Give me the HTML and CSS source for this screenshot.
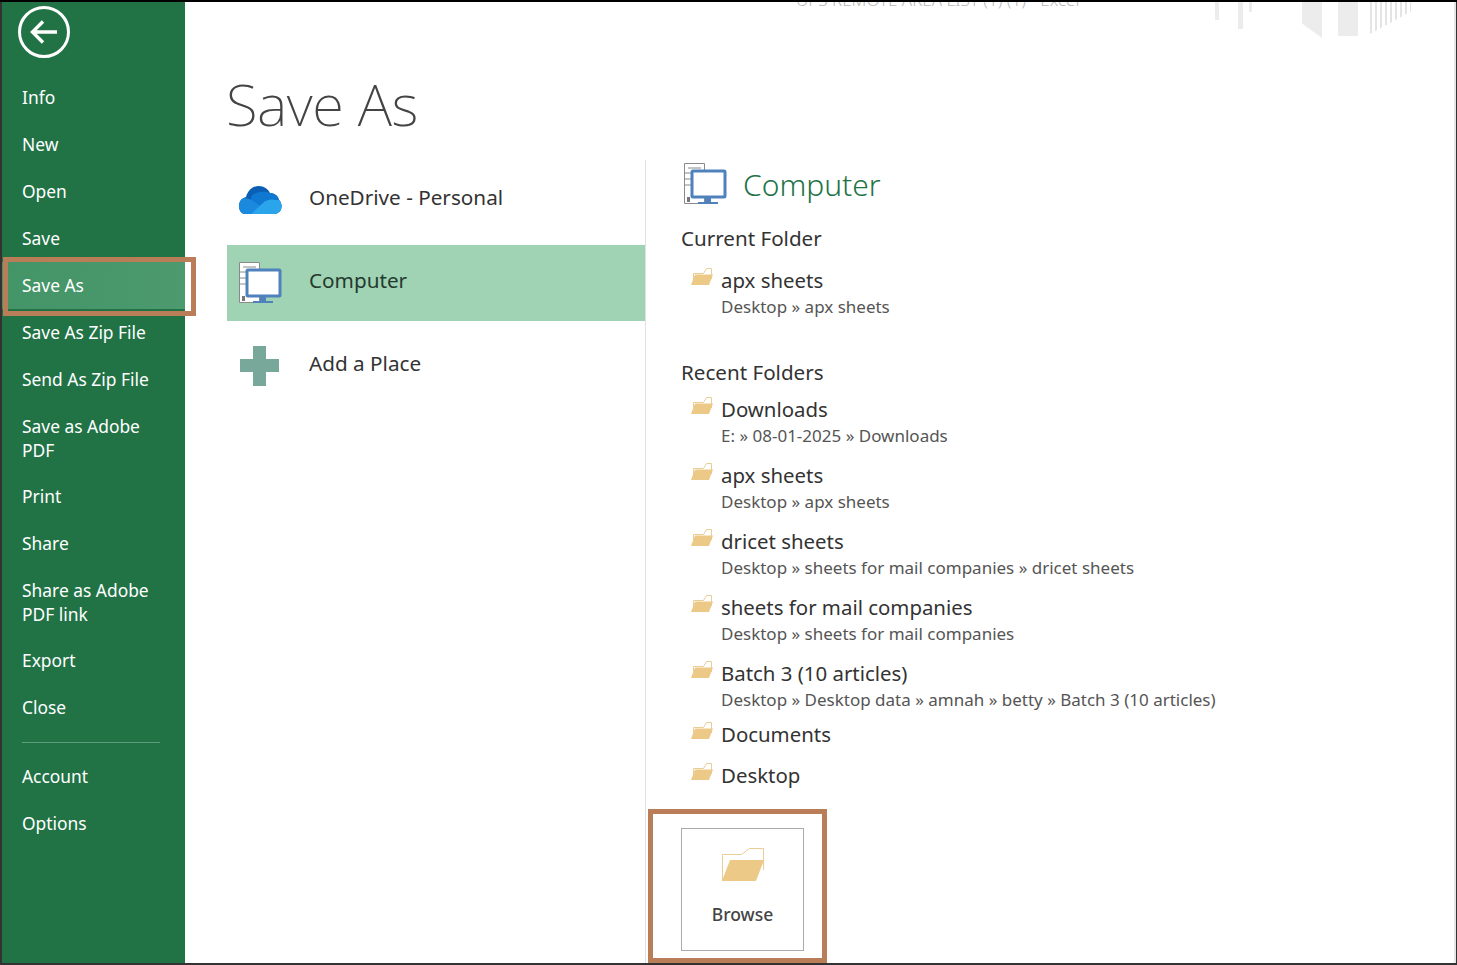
FILE: index.html
```html
<!DOCTYPE html>
<html lang="en">
<head>
<meta charset="utf-8">
<title>Save As</title>
<link rel="stylesheet" href="styles.css">
</head>
<body>
<div class="app">
  <aside class="sidebar">
    <div class="back">
      <svg width="54" height="54" viewBox="0 0 54 54" fill="none" stroke="#fff">
        <circle cx="27" cy="27" r="24.5" stroke-width="3"/>
        <path d="M40 27H16M26 16.5 15.5 27 26 37.5" stroke-width="3.4"/>
      </svg>
    </div>
    <nav class="nav">
      <a class="nav-item">Info</a>
      <a class="nav-item">New</a>
      <a class="nav-item">Open</a>
      <a class="nav-item">Save</a>
      <a class="nav-item nav-item-active">Save As</a>
      <a class="nav-item">Save As Zip File</a>
      <a class="nav-item">Send As Zip File</a>
      <a class="nav-item nav-item-wrap">Save as Adobe PDF</a>
      <a class="nav-item">Print</a>
      <a class="nav-item">Share</a>
      <a class="nav-item nav-item-wrap">Share as Adobe PDF link</a>
      <a class="nav-item">Export</a>
      <a class="nav-item">Close</a>
      <div class="nav-sep"></div>
      <a class="nav-item">Account</a>
      <a class="nav-item">Options</a>
    </nav>
  </aside>

  <main class="main">
    <div class="window-title">UPS REMOTE AREA LIST (1) (1) - Excel</div>
    <div class="deco">
      <span class="deco-bar deco-a"></span><span class="deco-bar deco-b"></span><span class="deco-bar deco-c"></span><span class="deco-bar deco-d"></span>
      <span class="deco-bar deco-e"></span><span class="deco-bar deco-f"></span>
    </div>
    <h1 class="title">Save As</h1>
    <div class="content">
      <section class="places">
        <div class="place">
          <svg class="place-icon" width="44" height="30" viewBox="0 0 44 30">
            <clipPath id="cloud-shape">
              <path d="M7 29C3 29 1 25 1 21 1 16 4 13 8 12 10 5 15 1 21 1 26 1 30 4 32 8 37 8 40 11 41 15 43 17 43.500 19 43.500 22 43.500 26 40 29 36 29Z"/>
            </clipPath>
            <g clip-path="url(#cloud-shape)">
              <path fill="#0a5fb4" d="M0 0h44v30H0z"/>
              <path fill="#0f78d0" d="M14 10c6-4 13-4 18-2 4 0 9 3 12 8v6L26 26 12 16z"/>
              <path fill="#1b8ade" d="M0 14c5-2 11-1 15 2l12 8-6 6H0z"/>
              <path fill="#2aa5ec" d="M12 30 26 17c3-2 7-3 10-2 3 0 6 0 8 1v14z"/>
            </g>
          </svg>
          <span class="place-label">OneDrive - Personal</span>
        </div>
        <div class="place place-active">
          <svg class="place-icon" width="44" height="44" viewBox="0 0 44 44">
            <use href="#computer-icon"/>
          </svg>
          <span class="place-label">Computer</span>
        </div>
        <div class="place">
          <svg class="place-icon" width="44" height="40" viewBox="0 0 44 40">
            <path fill="#78a89a" d="M15 0h13v13h13v13H28v14H15V26H2V13h13z"/>
          </svg>
          <span class="place-label">Add a Place</span>
        </div>
      </section>

      <section class="details">
        <header class="details-head">
          <svg width="44" height="44" viewBox="0 0 44 44">
            <symbol id="computer-icon" viewBox="0 0 44 44">
              <path fill="#fff" stroke="#8a8a8a" d="M1.500 1.500h20v40h-20z"/>
              <path stroke="#8a8a8a" fill="none" d="M5 6h13M2 11h8M2 17h8M2 23h8"/>
              <path fill="#777" d="M4 35h3v5H4z"/>
              <rect x="9" y="9" width="33" height="26" fill="#fff" stroke="#4f81bd" stroke-width="3" rx="1"/>
              <path fill="#4f81bd" d="M22 35h6v5h7v2H15v-2h7z"/>
            </symbol>
            <use href="#computer-icon"/>
          </svg>
          <h2 class="details-title">Computer</h2>
        </header>

        <h3 class="group-title">Current Folder</h3>
        <div class="folder folder-current">
          <svg class="folder-icon" viewBox="0 0 22 19"><use href="#small-folder"/></svg>
          <div><div class="folder-name">apx sheets</div><div class="folder-path">Desktop » apx sheets</div></div>
        </div>

        <h3 class="group-title group-recent">Recent Folders</h3>
        <div class="folder">
          <svg class="folder-icon" viewBox="0 0 22 19">
            <symbol id="small-folder" viewBox="0 0 22 19">
              <path fill="#fff" stroke="#e8cd97" d="M2.500 17V6.500h10l3-5h5V12"/>
              <path fill="#edc987" d="M0 18 4 7.500h18L18 18z"/>
            </symbol>
            <use href="#small-folder"/>
          </svg>
          <div><div class="folder-name">Downloads</div><div class="folder-path">E: » 08-01-2025 » Downloads</div></div>
        </div>
        <div class="folder">
          <svg class="folder-icon" viewBox="0 0 22 19"><use href="#small-folder"/></svg>
          <div><div class="folder-name">apx sheets</div><div class="folder-path">Desktop » apx sheets</div></div>
        </div>
        <div class="folder">
          <svg class="folder-icon" viewBox="0 0 22 19"><use href="#small-folder"/></svg>
          <div><div class="folder-name">dricet sheets</div><div class="folder-path">Desktop » sheets for mail companies » dricet sheets</div></div>
        </div>
        <div class="folder">
          <svg class="folder-icon" viewBox="0 0 22 19"><use href="#small-folder"/></svg>
          <div><div class="folder-name">sheets for mail companies</div><div class="folder-path">Desktop » sheets for mail companies</div></div>
        </div>
        <div class="folder folder-tight">
          <svg class="folder-icon" viewBox="0 0 22 19"><use href="#small-folder"/></svg>
          <div><div class="folder-name">Batch 3 (10 articles)</div><div class="folder-path">Desktop » Desktop data » amnah » betty » Batch 3 (10 articles)</div></div>
        </div>
        <div class="folder folder-single">
          <svg class="folder-icon" viewBox="0 0 22 19"><use href="#small-folder"/></svg>
          <div class="folder-name">Documents</div>
        </div>
        <div class="folder folder-single">
          <svg class="folder-icon" viewBox="0 0 22 19"><use href="#small-folder"/></svg>
          <div class="folder-name">Desktop</div>
        </div>

        <button class="browse">
          <svg width="44" height="34" viewBox="0 0 44 34">
            <path fill="#fff" stroke="#e8cd97" d="M1.500 33V6.500h19l8-6h14V22"/>
            <path fill="#edc987" d="M1 33 9 12h34l-8 21z"/>
          </svg>
          <span>Browse</span>
        </button>
      </section>
    </div>
  </main>

  <div class="callout callout-saveas"></div>
  <div class="callout callout-browse"></div>
</div>
</body>
</html>
```

FILE: styles.css
```css
* { box-sizing: border-box; }
html, body { margin: 0; height: 100%; }
body {
  background: #333;
  padding: 2px 1px 2px 2px;
  font-family: "Noto Sans", "Open Sans", sans-serif;
  overflow: hidden;
}
.app {
  position: relative;
  display: flex;
  height: 961px;
  background: #fff;
  border-right: 2px solid #e6e6e6;
  overflow: hidden;
}
body::before {
  content: "";
  position: fixed;
  inset: 0 0 auto 0;
  height: 2px;
  background: #000;
}

/* Sidebar */
.sidebar {
  width: 183px;
  flex: none;
  background: #217346;
  color: #fff;
}
.back {
  height: 72px;
  padding: 3px 0 0 15px;
}
.back svg { display: block; }
.nav-item {
  display: block;
  padding: 12px 20px 11.500px;
  font-size: 17.400px;
  line-height: 23.500px;
  color: #fff;
}
.nav-item-wrap { padding-bottom: 11px; }
.nav-item-active {
  background: linear-gradient(100deg, #439467, #4c9a6e);
}
.nav-sep {
  height: 1px;
  margin: 11px 25px 10px 20px;
  background: #5d9d7c;
}

/* Main */
.main {
  position: relative;
  flex: 1;
  min-width: 0;
}
.window-title {
  position: absolute;
  top: -11px;
  left: 611px;
  font-size: 17px;
  line-height: 18px;
  font-weight: 300;
  color: #b8b8b8;
  white-space: nowrap;
}
.deco-bar {
  position: absolute;
  top: 0;
  background: #ececec;
}
.deco-a { left: 1030px; width: 4px; height: 18px; }
.deco-b { left: 1053px; width: 5px; height: 27px; }
.deco-c { left: 1064px; width: 3px; height: 10px; }
.deco-d { left: 1117px; width: 20px; height: 36px; clip-path: polygon(0 0, 100% 0, 100% 100%, 0 60%); }
.deco-e { left: 1153px; width: 20px; height: 34px; }
.deco-f {
  left: 1185px;
  width: 41px;
  height: 32px;
  background: repeating-linear-gradient(90deg, #e4e4e4 0 2px, #fff 2px 5px);
  clip-path: polygon(0 0, 100% 0, 100% 30%, 0 100%);
}
.title {
  height: 158px;
  margin: 0;
  padding: 63px 0 0 41px;
  font-size: 58px;
  font-weight: 200;
  letter-spacing: -0.500px;
  line-height: 78px;
  color: #444;
}
.content {
  display: flex;
  height: 803px;
}

/* Places */
.places {
  width: 461px;
  flex: none;
  padding: 2px 0 0 42px;
  border-right: 1px solid #e1e1e1;
  display: flex;
  flex-direction: column;
  gap: 7px;
}
.place {
  display: flex;
  align-items: center;
  height: 76px;
  padding-left: 11px;
  font-size: 20.700px;
  color: #333;
}
.place-label { margin-bottom: 6px; }
.place-active {
  background: #a0d2b4;
  color: #243a2e;
}
.place-icon {
  flex: none;
  margin-right: 27px;
}

/* Details */
.details {
  flex: 1;
  padding: 2px 0 0 35px;
  min-width: 0;
}
.details-head {
  display: flex;
  align-items: center;
  height: 44px;
  margin-left: 2px;
  gap: 16px;
}
.details-head svg { overflow: visible; }
.details-title {
  margin: 0;
  font-size: 30px;
  font-weight: 300;
  color: #217346;
}
.group-title {
  margin: 18px 0 0;
  font-size: 20.600px;
  font-weight: 400;
  line-height: 28px;
  color: #333;
}
.group-recent { margin: 0 0 10px; }
.folder {
  display: flex;
  padding-left: 10px;
  padding-bottom: 12px;
}
.folder-current { margin-top: 15px; padding-bottom: 37px; }
.folder-tight { padding-bottom: 7px; }
.folder-single { padding-bottom: 15px; }
.folder-icon {
  flex: none;
  width: 22px;
  height: 19px;
  margin-right: 8px;
}
.folder-name {
  font-size: 20.400px;
  line-height: 26px;
  color: #333;
}
.folder-path {
  font-size: 17px;
  line-height: 28px;
  color: #555;
  white-space: nowrap;
}
.browse {
  display: flex;
  flex-direction: column;
  align-items: center;
  width: 123px;
  height: 123px;
  margin-top: 25px;
  padding: 19px 0 0;
  background: #fff;
  border: 1px solid #aaa;
  font: inherit;
  font-size: 17.500px;
  font-weight: 500;
  color: #444;
}
.browse span { margin-top: 20px; line-height: 24px; }

/* Callouts */
.callout {
  position: absolute;
  border: 5px solid #b97d58;
  pointer-events: none;
}
.callout-saveas { left: 1px; top: 255px; width: 193px; height: 59px; }
.callout-browse { left: 646px; top: 807px; width: 179px; height: 154px; }
```
